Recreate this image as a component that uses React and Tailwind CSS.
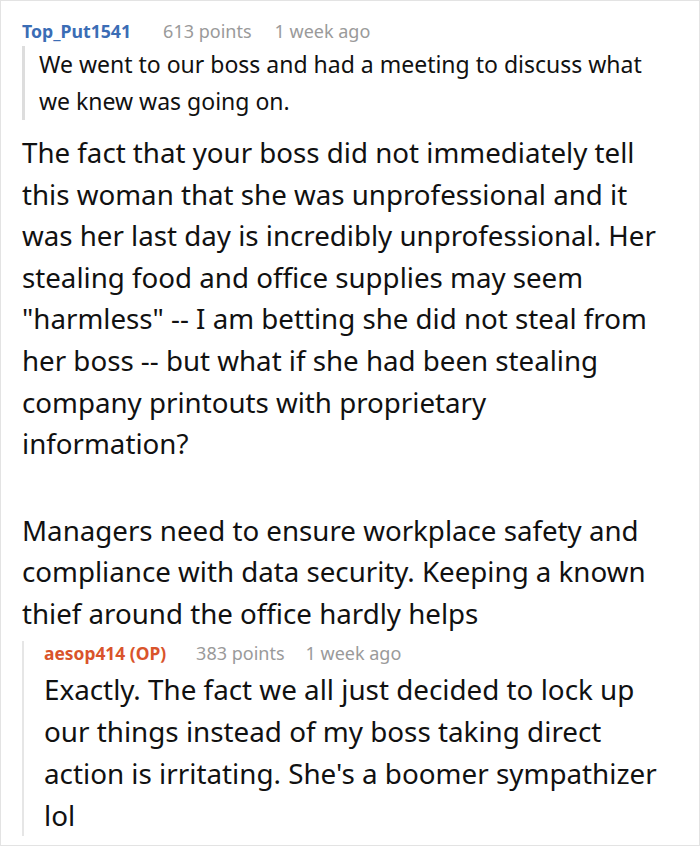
export default function App() {
  return (
    <div className="w-[700px] h-[846px] bg-white border border-[#e3e3e3] overflow-hidden" style={{ fontFamily: '"Noto Sans", "Open Sans", sans-serif' }}>
      <div className="pl-[21px] pr-[42px] pt-[18px]">
        <div className="flex items-baseline gap-[23px] leading-[24px]">
          <span className="font-bold text-[17.7px] text-[#3b6db5] mr-[9px]">Top_Put1541</span>
          <span className="text-[18px] text-[#9a9a9a]">613 points</span>
          <span className="text-[18px] text-[#9a9a9a]">1 week ago</span>
        </div>
        <div className="mt-[3px] border-l-[3px] border-[#dddddd] pl-[14px] text-[23px] leading-[37px] text-[#111]">
          We went to our boss and had a meeting to discuss what we knew was going on.
        </div>
        <div className="mt-[12px] text-[27.7px] leading-[41.6px] text-[#111]">
          <p>
            The fact that your boss did not immediately tell this woman that she was unprofessional and it was her last day is incredibly unprofessional. Her stealing food and office supplies may seem "harmless" -- I am betting she did not steal from her boss -- but what if she had been stealing company printouts with proprietary information?
          </p>
          <p className="mt-[45px]">
            Managers need to ensure workplace safety and compliance with data security. Keeping a known thief around the office hardly helps
          </p>
        </div>
        <div className="mt-[6px] mr-[-20px] border-l-2 border-[#e6e6e6] pl-[20px]">
          <div className="flex items-baseline gap-[21px] leading-[24px]">
            <span className="font-bold text-[17.4px] text-[#d9542b] mr-[9px]">aesop414 (OP)</span>
            <span className="text-[18px] text-[#9a9a9a]">383 points</span>
            <span className="text-[18px] text-[#9a9a9a]">1 week ago</span>
          </div>
          <div className="mt-[3px] text-[27.8px] leading-[42px] text-[#111]">
            Exactly. The fact we all just decided to lock up our things instead of my boss taking direct action is irritating. She's a boomer sympathizer lol
          </div>
        </div>
      </div>
    </div>
  );
}
